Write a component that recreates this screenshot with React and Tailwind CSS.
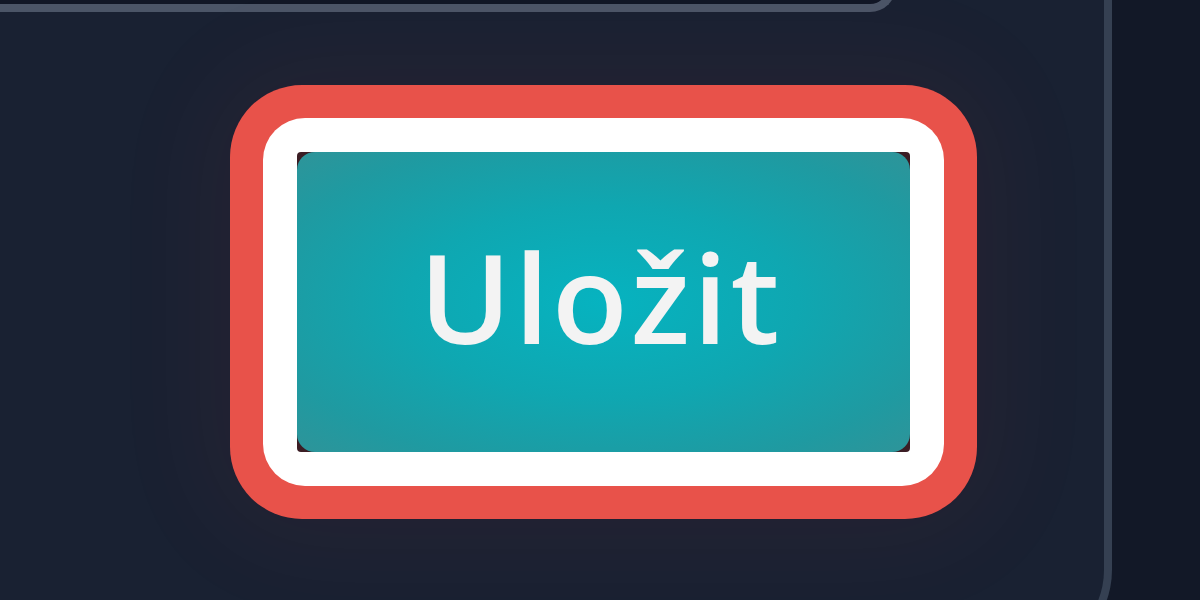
export default function App() {
  return (
    <div className="w-[1200px] h-[600px] overflow-hidden bg-[#121827] flex" style={{ fontFamily: '"Open Sans", "Liberation Sans", sans-serif' }}>
      {/* panel */}
      <div className="w-[1112px] h-[660px] shrink-0 bg-[#192132] border-r-[8px] border-b-[8px] border-[#354052] rounded-br-[90px] flex flex-col">
        {/* field above */}
        <div className="w-[896px] h-[212px] mt-[-200px] shrink-0 bg-[#111726] border-[8px] border-t-0 border-l-0 border-[#4b5567] rounded-br-[26px]" />

        <div className="pl-[230px] pt-[73px]">
          {/* focus rings */}
          <div className="w-[747px] h-[434px] rounded-[72px] bg-[#e8524a] p-[33px] shadow-[0_0_100px_30px_rgba(232,82,74,0.05)]">
            <div className="w-full h-full rounded-[42px] bg-white p-[34px]">
              <div className="w-full h-full rounded-[4px] bg-[#3b1d24]">
                <button
                  type="button"
                  className="w-full h-full rounded-[18px] flex items-center justify-center bg-[radial-gradient(ellipse_at_center,#06b3c0_0%,#0fa7b1_45%,#1f9aa1_80%,#2e9499_100%)] text-[#f3f3f3] text-[124px] leading-none font-semibold tracking-[3px]"
                >
                  <span className="mt-[-12px] ml-[-5px]">Uložit</span>
                </button>
              </div>
            </div>
          </div>
        </div>
      </div>
    </div>
  );
}
